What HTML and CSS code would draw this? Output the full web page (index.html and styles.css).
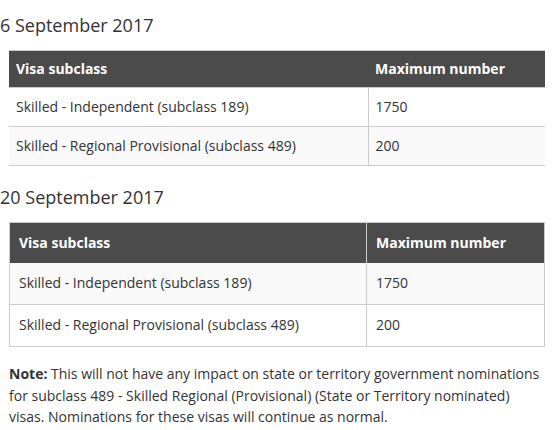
FILE: index.html
```html
<!DOCTYPE html>
<html>
<head>
<meta charset="utf-8">
<link rel="stylesheet" href="styles.css">
</head>
<body>
<div class="page">
  <h2 class="date">6 September 2017</h2>
  <table class="quota quota-plain">
    <thead>
      <tr><th class="c1">Visa subclass</th><th>Maximum number</th></tr>
    </thead>
    <tbody>
      <tr><td>Skilled - Independent (subclass 189)</td><td>1750</td></tr>
      <tr class="alt"><td>Skilled - Regional Provisional (subclass 489)</td><td>200</td></tr>
    </tbody>
  </table>
  <h2 class="date date-2">20 September 2017</h2>
  <table class="quota quota-boxed">
    <thead>
      <tr><th class="c1">Visa subclass</th><th>Maximum number</th></tr>
    </thead>
    <tbody>
      <tr class="alt"><td>Skilled - Independent (subclass 189)</td><td>1750</td></tr>
      <tr><td>Skilled - Regional Provisional (subclass 489)</td><td>200</td></tr>
    </tbody>
  </table>
  <p class="note"><strong>Note:</strong> This will not have any impact on state or territory government nominations for subclass 489 - Skilled Regional (Provisional) (State or Territory nominated) visas. Nominations for these visas will continue as normal.</p>
</div>
</body>
</html>
```
FILE: styles.css
```css
html, body {
  margin: 0;
  padding: 0;
  background: #fff;
}
body {
  font-family: "Open Sans", "Liberation Sans", sans-serif;
  color: #333;
  font-size: 14px;
}
.page {
  padding: 13px 11px 0 9px;
}
.date {
  font-size: 18px;
  font-weight: 400;
  line-height: 24px;
  margin: 0 0 13px -9px;
  color: #333;
}
.date-2 {
  margin-top: 19px;
}
.quota {
  width: 536px;
  border-collapse: collapse;
  font-size: 14px;
  line-height: 20px;
}
.quota th {
  background: #4b4b4b;
  color: #fff;
  font-weight: 700;
  text-align: left;
}
.quota td {
  text-align: left;
}
.quota tr.alt td {
  background: #f9f9f9;
}
.quota-plain {
  border-top: 1px solid #ccc;
}
.quota-plain th {
  padding: 8px 7px 8px 7px;
  border-bottom: 1px solid #ccc;
}
.quota-plain td {
  padding: 9px 7px 9px 7px;
  border-bottom: 1px solid #ccc;
}
.quota-plain td + td {
  border-left: 1px solid #ccc;
}
.quota-plain .c1 {
  width: 345px;
}
.quota-boxed {
  border: 1px solid #ccc;
}
.quota-boxed th {
  padding: 10px 9px;
}
.quota-boxed th + th {
  border-left: 1px solid #ccc;
}
.quota-boxed td {
  padding: 10px 9px 11px 9px;
  border-bottom: 1px solid #ccc;
}
.quota-boxed td + td {
  border-left: 1px solid #ccc;
}
.quota-boxed .c1 {
  width: 338px;
}
.note {
  margin: 16px 0 0 0;
  line-height: 21.5px;
}
.note strong {
  font-weight: 700;
}
```
